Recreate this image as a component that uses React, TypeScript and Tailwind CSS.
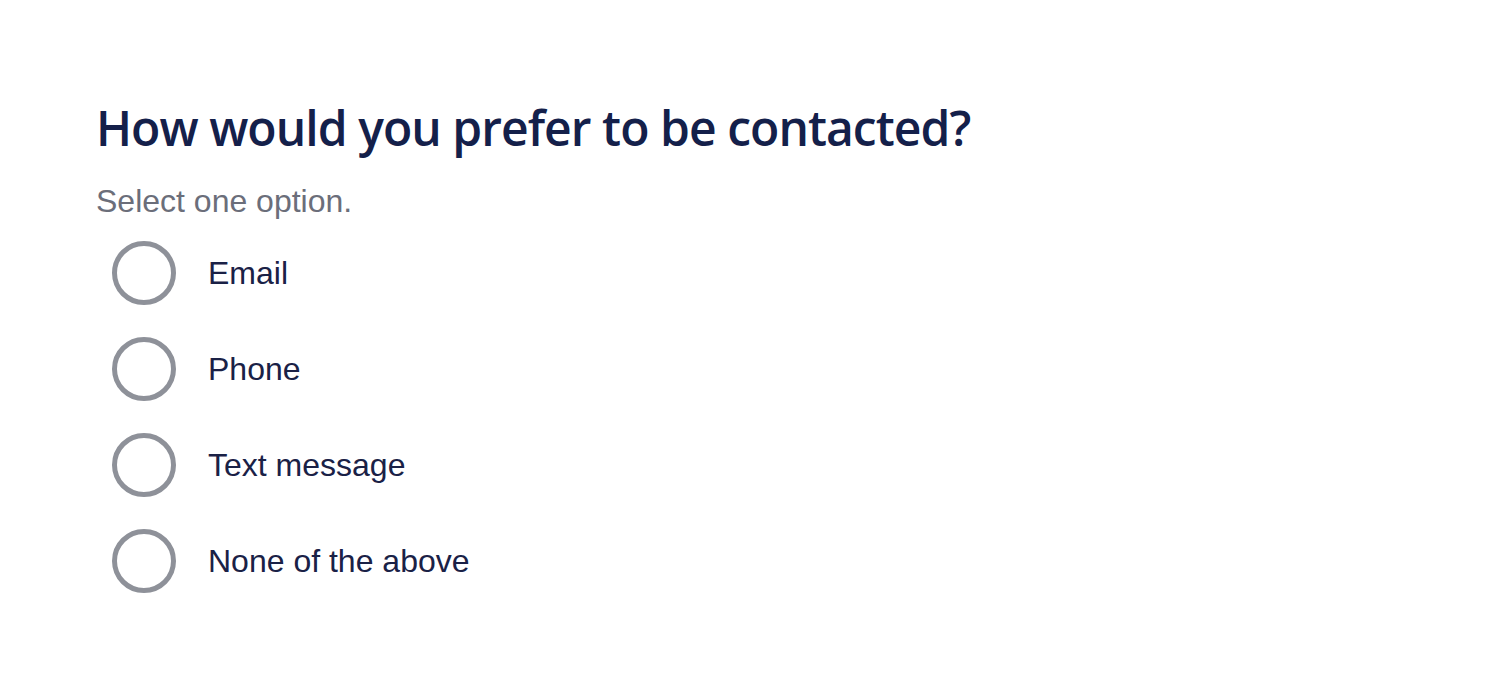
import React from "react";

const options = ["Email", "Phone", "Text message", "None of the above"];

export default function App() {
  return (
    <div className="min-h-screen bg-white pt-[99px] px-[96px]">
      <h1
        className="text-[48px] leading-[1.2] font-semibold tracking-[-0.95px] text-[#14204a]"
        style={{ fontFamily: '"Open Sans", "Noto Sans", sans-serif' }}
      >
        How would you prefer to be contacted?
      </h1>
      <p
        className="mt-5 text-[32px] leading-[48px] text-[#6b6e7a]"
        style={{ fontFamily: '"Liberation Sans", Arial, sans-serif' }}
      >
        Select one option.
      </p>
      <div className="flex flex-col">
        {options.map((o) => (
          <label key={o} className="flex h-[96px] items-center pl-4 gap-8 cursor-pointer">
            <span className="block h-16 w-16 shrink-0 rounded-full border-[5px] border-[#8e9199] bg-white" />
            <span
              className="text-[32px] leading-[48px] text-[#1a2146]"
              style={{ fontFamily: '"Liberation Sans", Arial, sans-serif' }}
            >
              {o}
            </span>
          </label>
        ))}
      </div>
    </div>
  );
}
